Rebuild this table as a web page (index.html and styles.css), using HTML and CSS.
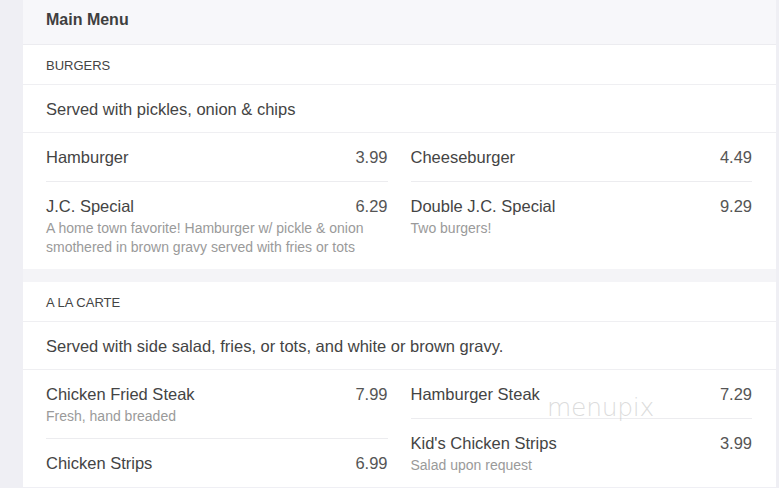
FILE: index.html
```html
<!DOCTYPE html>
<html>
<head>
<meta charset="utf-8">
<link rel="stylesheet" href="styles.css">
</head>
<body>
<div class="page">
  <main class="menu">
    <header class="menu-title">Main Menu</header>

    <section class="card">
      <h2 class="sec-head">BURGERS</h2>
      <p class="sec-desc">Served with pickles, onion &amp; chips</p>
      <div class="cols">
        <div class="col">
          <div class="item">
            <div class="line"><span class="name">Hamburger</span><span class="price">3.99</span></div>
          </div>
          <div class="item">
            <div class="line"><span class="name">J.C. Special</span><span class="price">6.29</span></div>
            <div class="desc">A home town favorite! Hamburger w/ pickle &amp; onion smothered in brown gravy served with fries or tots</div>
          </div>
        </div>
        <div class="col">
          <div class="item">
            <div class="line"><span class="name">Cheeseburger</span><span class="price">4.49</span></div>
          </div>
          <div class="item">
            <div class="line"><span class="name">Double J.C. Special</span><span class="price">9.29</span></div>
            <div class="desc">Two burgers!</div>
          </div>
        </div>
      </div>
    </section>

    <section class="card">
      <h2 class="sec-head">A LA CARTE</h2>
      <p class="sec-desc">Served with side salad, fries, or tots, and white or brown gravy.</p>
      <div class="cols">
        <div class="col">
          <div class="item">
            <div class="line"><span class="name">Chicken Fried Steak</span><span class="price">7.99</span></div>
            <div class="desc">Fresh, hand breaded</div>
          </div>
          <div class="item">
            <div class="line"><span class="name">Chicken Strips</span><span class="price">6.99</span></div>
          </div>
        </div>
        <div class="col">
          <div class="item">
            <div class="line"><span class="name">Hamburger Steak</span><span class="price">7.29</span></div>
          </div>
          <div class="item">
            <div class="line"><span class="name">Kid's Chicken Strips</span><span class="price">3.99</span></div>
            <div class="desc">Salad upon request</div>
          </div>
        </div>
      </div>
      <span class="watermark">menupix</span>
    </section>
  </main>
</div>
</body>
</html>
```

FILE: styles.css
```css
html, body {
  margin: 0;
  padding: 0;
  background: #efeff4;
  font-family: "Liberation Sans", Arial, sans-serif;
  color: #444;
}

.page {
  padding: 0 3px 0 23px;
}

.menu {
  background: #f4f4f7;
  display: flex;
  flex-direction: column;
  gap: 13px;
}

.menu-title {
  background: #f7f7fa;
  font-size: 16px;
  font-weight: bold;
  color: #3f3f3f;
  line-height: 18px;
  padding: 11px 23px 15px;
  border-bottom: 1px solid #ececf0;
  margin-bottom: -13px;
}

.card {
  background: #fff;
  position: relative;
}

.sec-head {
  margin: 0;
  font-size: 13px;
  font-weight: normal;
  line-height: 16px;
  color: #444;
  padding: 13px 23px 10px;
  border-bottom: 1px solid #efeff2;
}

.sec-desc {
  margin: 0;
  font-size: 16.5px;
  line-height: 20px;
  color: #444;
  padding: 14px 23px 13px;
  border-bottom: 1px solid #efeff2;
}

.cols {
  display: grid;
  grid-template-columns: 1fr 1fr;
  column-gap: 23px;
  padding: 0 24px 0 23px;
}

.item {
  padding: 12px 0 12px;
  border-bottom: 1px solid #ececef;
}

.item:last-child {
  border-bottom: none;
}

.line {
  display: flex;
  justify-content: space-between;
  align-items: baseline;
  font-size: 16.5px;
  line-height: 24px;
}

.name {
  color: #444;
}

.price {
  color: #555;
}

.desc {
  font-size: 14px;
  line-height: 19px;
  color: #9a9a9a;
  padding-top: 1px;
}

.watermark {
  position: absolute;
  left: 524px;
  top: 111px;
  font-family: "DejaVu Sans", sans-serif;
  font-weight: 200;
  font-size: 25px;
  letter-spacing: -0.3px;
  color: rgba(185, 185, 185, 0.5);
  pointer-events: none;
}
```
